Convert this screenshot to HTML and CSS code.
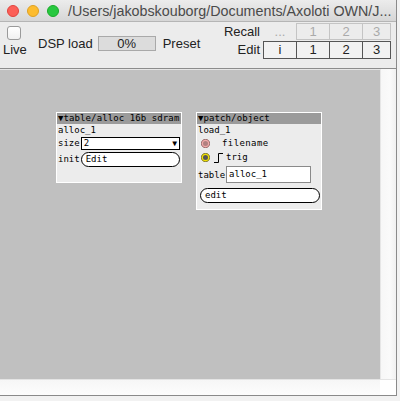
FILE: index.html
```html
<!DOCTYPE html>
<html>
<head>
<meta charset="utf-8">
<link rel="stylesheet" href="styles.css">
</head>
<body>
<div class="window">
  <div class="titlebar">
    <div class="lights">
      <span class="light red"></span>
      <span class="light yellow"></span>
      <span class="light green"></span>
    </div>
    <div class="title">/Users/jakobskouborg/Documents/Axoloti OWN/J...</div>
  </div>
  <div class="toolbar">
    <div class="live">
      <span class="checkbox"></span>
      <span class="live-label">Live</span>
    </div>
    <div class="dsp">
      <span class="dsp-label">DSP load</span>
      <span class="meter">0%</span>
      <span class="preset">Preset</span>
    </div>
    <div class="presets">
      <span class="plabel">Recall</span>
      <span class="pbtn dis noborder">...</span>
      <span class="pbtn dis">1</span>
      <span class="pbtn dis">2</span>
      <span class="pbtn dis">3</span>
      <span class="plabel">Edit</span>
      <span class="pbtn">i</span>
      <span class="pbtn">1</span>
      <span class="pbtn">2</span>
      <span class="pbtn">3</span>
    </div>
  </div>
  <div class="main">
    <div class="canvas">
      <div class="obj obj1">
        <div class="hdr">▼table/alloc 16b sdram</div>
        <div class="row">alloc_1</div>
        <div class="row"><span class="lbl">size</span><span class="dropdown"><span>2</span><span class="arr">▼</span></span></div>
        <div class="row"><span class="lbl">init</span><span class="pill">Edit</span></div>
      </div>
      <div class="obj obj2">
        <div class="hdr">▼patch/object</div>
        <div class="row">load_1</div>
        <div class="row io">
          <svg class="inlet" width="9" height="9" viewBox="0 0 9 9"><circle cx="4.5" cy="4.5" r="3.5" fill="#b08080" stroke="#f0a8a8" stroke-width="2"/><circle cx="4.5" cy="4.5" r="4.2" fill="none" stroke="#7a5a5a" stroke-width="0.7"/></svg>
          <span class="io-name fname">filename</span>
        </div>
        <div class="row io">
          <svg class="inlet" width="9" height="9" viewBox="0 0 9 9"><circle cx="4.5" cy="4.5" r="3.5" fill="#555" stroke="#f0e000" stroke-width="2"/><circle cx="4.5" cy="4.5" r="4.2" fill="none" stroke="#555" stroke-width="0.7"/></svg>
          <svg class="step" width="9" height="11" viewBox="0 0 9 11"><path d="M0 10.5 H4.5 V1.5 H9" fill="none" stroke="#000" stroke-width="1"/></svg>
          <span class="io-name">trig</span>
        </div>
        <div class="row tablerow"><span class="lbl">table</span><span class="field">alloc_1</span></div>
        <div class="row"><span class="pill wide">edit</span></div>
      </div>
    </div>
    <div class="vscroll"></div>
  </div>
  <div class="hscroll">
    <div class="hs-track"></div>
    <div class="corner"></div>
  </div>
</div>
</body>
</html>
```
FILE: styles.css
```css
html, body {
  margin: 0;
  padding: 0;
}
body {
  width: 400px;
  height: 401px;
  background: #f2f2f2;
  overflow: hidden;
  font-family: "Liberation Sans", Arial, sans-serif;
}
.window {
  width: 397px;
  height: 396px;
  border-right: 1px solid #8a8a8a;
  border-bottom: 1px solid #8a8a8a;
  box-sizing: border-box;
  display: flex;
  flex-direction: column;
  background: #ececec;
}
.titlebar {
  height: 22px;
  flex: none;
  box-sizing: border-box;
  background: linear-gradient(#ececec, #d6d6d6);
  border-bottom: 1px solid #b5b5b5;
  display: flex;
  align-items: center;
}
.lights {
  display: flex;
  gap: 8px;
  padding-left: 7px;
  width: 60px;
  flex: none;
}
.light {
  width: 12px;
  height: 12px;
  border-radius: 50%;
  box-sizing: border-box;
}
.red { background: #fc5f57; border: 1px solid #e0443e; }
.yellow { background: #fdbc2e; border: 1px solid #dea123; }
.green { background: #28c840; border: 1px solid #1aab29; }
.title {
  font-size: 14.3px;
  color: #4a4a4a;
  white-space: nowrap;
  padding-left: 1px;
}
.toolbar {
  height: 47px;
  flex: none;
  box-sizing: border-box;
  border-bottom: 1px solid #8c8c8c;
  display: flex;
  font-size: 13px;
  color: #222;
  background: #ececec;
}
.live {
  width: 34px;
  display: flex;
  flex-direction: column;
  align-items: flex-start;
  padding-top: 4px;
}
.checkbox {
  width: 12px;
  height: 12px;
  margin-left: 7px;
  border: 1px solid #9a9a9a;
  border-radius: 3px;
  background: linear-gradient(#fff, #f0f0f0);
}
.live-label {
  margin-top: 2px;
  margin-left: 3px;
}
.dsp {
  display: flex;
  align-items: center;
  padding-top: 4px;
  height: 35px;
  width: 190px;
  margin-left: 4px;
}
.dsp-label { margin-right: 5px; }
.meter {
  width: 58px;
  height: 15px;
  box-sizing: border-box;
  border: 1px solid #a9a9a9;
  background: #dcdcdc;
  text-align: center;
  line-height: 13px;
  font-size: 13px;
  margin-right: 7px;
}
.presets {
  display: grid;
  grid-template-columns: 43px 33px 33px 33px 28px;
  grid-template-rows: 17px 18px;
  row-gap: 1px;
  padding-top: 1px;
  margin-left: -7px;
}
.plabel {
  text-align: right;
  padding-right: 4px;
  line-height: 17px;
}
.pbtn {
  border: 1px solid #555;
  margin-left: -1px;
  text-align: center;
  line-height: 16px;
  background: #f2f2f2;
}
.pbtn.dis {
  color: #aaa;
  border-color: #c4c4c4;
  background: #ececec;
}
.pbtn.noborder {
  border-color: transparent;
}
.main {
  flex: 1;
  display: flex;
  min-height: 0;
}
.canvas {
  flex: 1;
  background: #c0c0c0;
  position: relative;
  border-top: 1px solid #e6e6e6;
}
.vscroll {
  width: 15px;
  background: linear-gradient(90deg, #f7f7f7, #fafafa 60%, #f0f0f0);
  border-left: 1px solid #e6e6e6;
}
.hscroll {
  height: 15px;
  flex: none;
  display: flex;
  background: linear-gradient(#f6f6f6, #fdfdfd);
  border-top: 1px solid #e4e4e4;
}
.hs-track { flex: 1; }
.corner {
  width: 16px;
  background: #fff;
}
.obj {
  position: absolute;
  background: #ececec;
  border: 1px solid #fff;
  font-family: "DejaVu Sans Mono", monospace;
  font-size: 9px;
  color: #000;
  display: flex;
  flex-direction: column;
}
.obj1 {
  left: 56px;
  top: 42px;
  width: 124px;
  height: 69px;
}
.obj2 {
  left: 196px;
  top: 42px;
  width: 124px;
  height: 96px;
}
.hdr {
  background: #9b9b9b;
  height: 11px;
  line-height: 11px;
  padding-left: 1px;
  white-space: nowrap;
  overflow: hidden;
  letter-spacing: 0.1px;
}
.row {
  display: flex;
  align-items: center;
  min-height: 12px;
  line-height: 12px;
  padding-left: 1px;
  white-space: nowrap;
}
.lbl { margin-right: 1px; }
.dropdown {
  flex: 1;
  margin-right: 1px;
  display: flex;
  justify-content: space-between;
  align-items: center;
  height: 13px;
  box-sizing: border-box;
  border: 1px solid #000;
  background: #fff;
  padding: 0 2px;
  line-height: 11px;
  margin-top: 1px;
}
.arr { font-size: 8px; }
.pill {
  flex: 1;
  height: 15px;
  box-sizing: border-box;
  border: 1px solid #000;
  border-radius: 8px;
  background: #fff;
  padding-left: 4px;
  line-height: 13px;
  margin-top: 2px;
  margin-right: 1px;
}
.pill.wide {
  margin: 5px 1px 0 2px;
}
.io { height: 14px; }
.inlet {
  margin-left: 3px;
  margin-right: 4px;
  flex: none;
}
.fname { margin-left: 8px; letter-spacing: 0.4px; }
.step { margin-right: 3px; }
.tablerow { margin-top: 2px; }
.field {
  width: 85px;
  height: 17px;
  box-sizing: border-box;
  border: 1px solid #8a8a8a;
  background: #fff;
  line-height: 15px;
  padding-left: 2px;
}
```
